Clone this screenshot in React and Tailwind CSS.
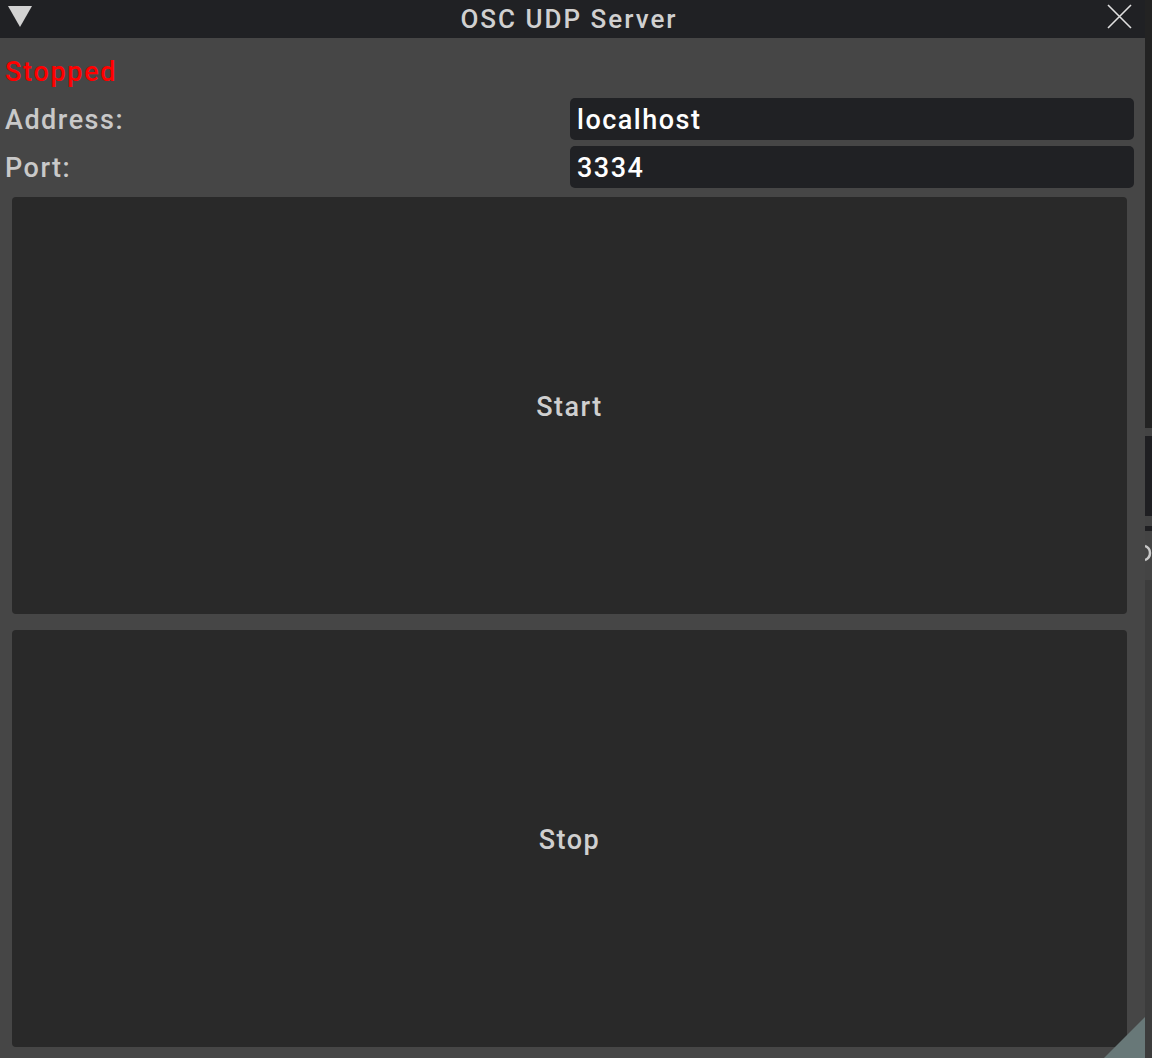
import React from "react";

export default function App() {
  const font = { fontFamily: "Roboto, 'Noto Sans', sans-serif" };
  return (
    <div className="w-[1152px] h-[1058px] flex bg-[#464646] overflow-hidden" style={font}>
      <div className="w-[1145px] h-full flex flex-col relative">
        {/* Title bar */}
        <div className="h-[38px] bg-[#202124] flex items-center relative shrink-0">
          <svg width="24" height="21" viewBox="0 0 24 21" className="ml-[8px] mt-[-6px]">
            <polygon points="0,0 24,0 12,21" fill="#d2d2d2" />
          </svg>
          <div className="absolute left-0 right-0 top-0 h-[38px] flex items-center justify-center text-[26px] font-medium tracking-[2px] text-[#d0d0d0] pointer-events-none">
            <span className="ml-[-7px] leading-none">OSC UDP Server</span>
          </div>
          <svg width="25" height="25" viewBox="0 0 25 25" className="absolute left-[1107px] top-[4px]">
            <path d="M1 1 L24 24 M24 1 L1 24" stroke="#e0e0e0" strokeWidth="1.6" />
          </svg>
        </div>
        {/* Content */}
        <div className="flex-1 flex flex-col pt-[13px]">
          <div className="h-[42px] flex items-center pl-[5px] text-[27px] tracking-[1.7px] text-[#ff0000] font-medium leading-none">
            Stopped
          </div>
          <div className="h-[42px] mt-[5px] flex items-center">
            <div className="w-[570px] pl-[5px] pt-[3px] text-[27px] font-medium tracking-[1.5px] text-[#c9c9c9] leading-none">Address:</div>
            <div className="w-[564px] h-[42px] bg-[#202124] rounded-[5px] flex items-center pl-[7px] pt-[3px] text-[27px] font-medium tracking-[1.5px] text-white leading-none">
              localhost
            </div>
          </div>
          <div className="h-[42px] mt-[6px] flex items-center">
            <div className="w-[570px] pl-[5px] pt-[3px] text-[27px] font-medium tracking-[1.5px] text-[#c9c9c9] leading-none">Port:</div>
            <div className="w-[564px] h-[42px] bg-[#202124] rounded-[5px] flex items-center pl-[7px] pt-[3px] text-[27px] font-medium tracking-[1.5px] text-white leading-none">
              3334
            </div>
          </div>
          <div className="mt-[9px] ml-[12px] w-[1115px] h-[417px] bg-[#292929] rounded-[4px] flex items-center justify-center pt-[4px] text-[27px] font-medium tracking-[1.5px] text-[#cfcfcf]">
            Start
          </div>
          <div className="mt-[16px] ml-[12px] w-[1115px] h-[417px] bg-[#292929] rounded-[4px] flex items-center justify-center pt-[4px] text-[27px] font-medium tracking-[1.5px] text-[#cfcfcf]">
            Stop
          </div>
        </div>
        {/* resize grip */}
        <svg width="41" height="41" viewBox="0 0 41 41" className="absolute right-0 bottom-0">
          <polygon points="41,0 41,41 0,41" fill="#687878" />
        </svg>
      </div>
      {/* right strip */}
      <div className="w-[7px] h-full flex flex-col">
        <div className="h-[428px] bg-[#232323]" />
        <div className="h-[8px] bg-[#444444]" />
        <div className="h-[80px] bg-[#1f1f22]" />
        <div className="h-[10px] bg-[#444444]" />
        <div className="h-[5px] bg-[#1f1f22]" />
        <div className="h-[49px] bg-[#444444]">
          <svg width="7" height="49" viewBox="0 0 7 49">
            <path d="M0 15 Q5 17 5 22 Q5 27 0 29" stroke="#c8c8c8" strokeWidth="2.5" fill="none" />
          </svg>
        </div>
        <div className="flex-1 bg-[#3c3c3c]" />
      </div>
    </div>
  );
}
